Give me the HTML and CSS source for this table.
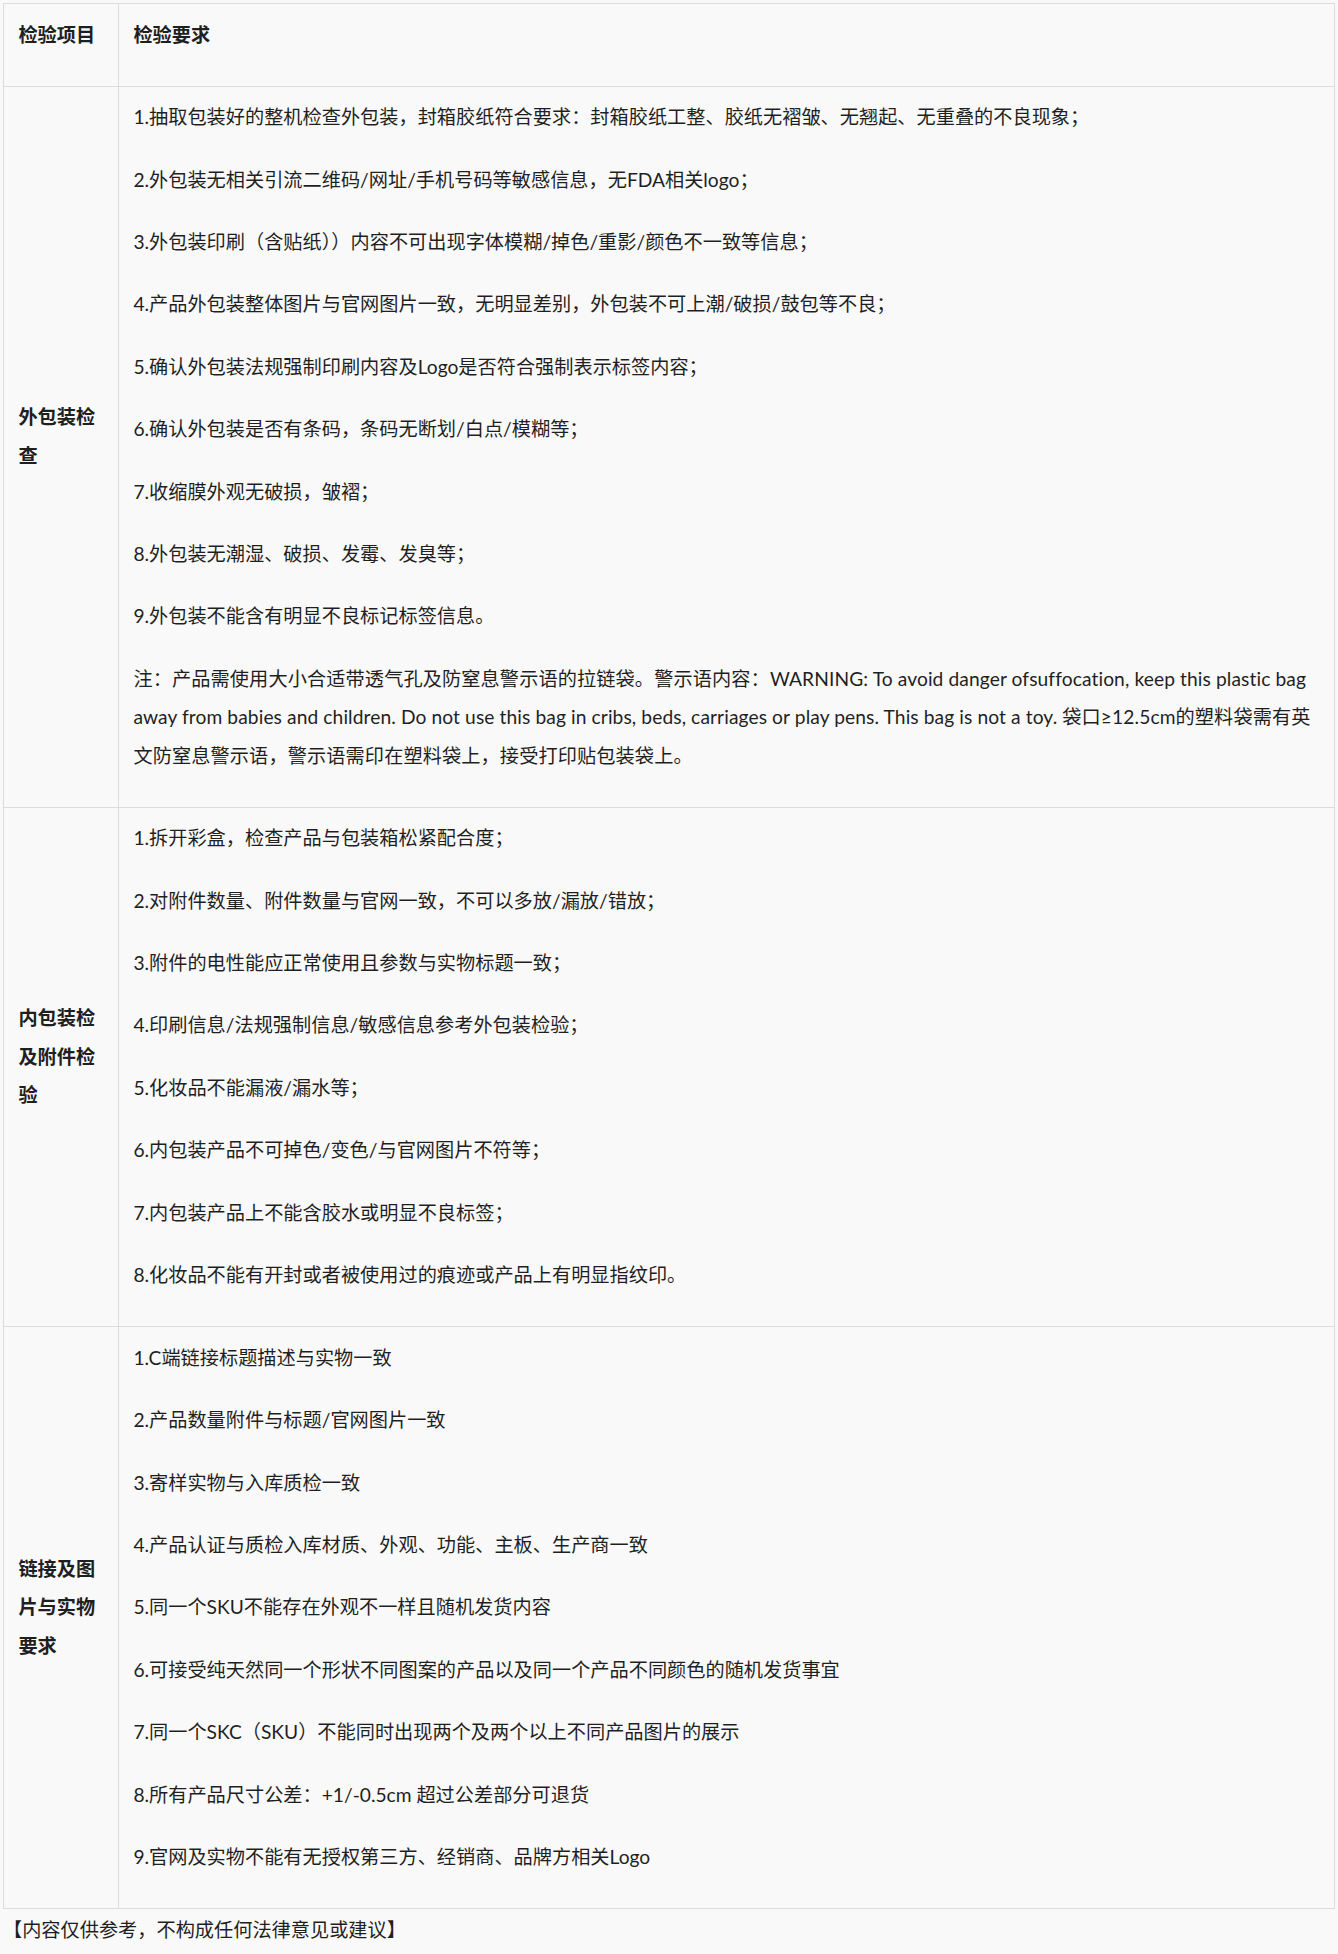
FILE: index.html
```html
<!DOCTYPE html>
<html lang="zh-CN">
<head>
<meta charset="utf-8">
<title>检验要求</title>
<link rel="stylesheet" href="styles.css">
</head>
<body>
<div class="page">
<table class="spec">
  <colgroup><col class="col-item"><col class="col-req"></colgroup>
  <thead>
    <tr>
      <th><p>检验项目</p></th>
      <th><p>检验要求</p></th>
    </tr>
  </thead>
  <tbody>
    <tr>
      <th><p>外包装检查</p></th>
      <td>
        <p>1.抽取包装好的整机检查外包装，封箱胶纸符合要求：封箱胶纸工整、胶纸无褶皱、无翘起、无重叠的不良现象；</p>
        <p>2.外包装无相关引流二维码/网址/手机号码等敏感信息，无FDA相关logo；</p>
        <p>3.外包装印刷（含贴纸））内容不可出现字体模糊/掉色/重影/颜色不一致等信息；</p>
        <p>4.产品外包装整体图片与官网图片一致，无明显差别，外包装不可上潮/破损/鼓包等不良；</p>
        <p>5.确认外包装法规强制印刷内容及Logo是否符合强制表示标签内容；</p>
        <p>6.确认外包装是否有条码，条码无断划/白点/模糊等；</p>
        <p>7.收缩膜外观无破损，皱褶；</p>
        <p>8.外包装无潮湿、破损、发霉、发臭等；</p>
        <p>9.外包装不能含有明显不良标记标签信息。</p>
        <p class="note">注：产品需使用大小合适带透气孔及防窒息警示语的拉链袋。警示语内容：WARNING: To avoid danger ofsuffocation, keep this plastic bag away from babies and children. Do not use this bag in cribs, beds, carriages or play pens. This bag is not a toy. 袋口≥12.5cm的塑料袋需有英文防窒息警示语，警示语需印在塑料袋上，接受打印贴包装袋上。</p>
      </td>
    </tr>
    <tr>
      <th><p>内包装检及附件检验</p></th>
      <td>
        <p>1.拆开彩盒，检查产品与包装箱松紧配合度；</p>
        <p>2.对附件数量、附件数量与官网一致，不可以多放/漏放/错放；</p>
        <p>3.附件的电性能应正常使用且参数与实物标题一致；</p>
        <p>4.印刷信息/法规强制信息/敏感信息参考外包装检验；</p>
        <p>5.化妆品不能漏液/漏水等；</p>
        <p>6.内包装产品不可掉色/变色/与官网图片不符等；</p>
        <p>7.内包装产品上不能含胶水或明显不良标签；</p>
        <p>8.化妆品不能有开封或者被使用过的痕迹或产品上有明显指纹印。</p>
      </td>
    </tr>
    <tr>
      <th><p>链接及图片与实物要求</p></th>
      <td>
        <p>1.C端链接标题描述与实物一致</p>
        <p>2.产品数量附件与标题/官网图片一致</p>
        <p>3.寄样实物与入库质检一致</p>
        <p>4.产品认证与质检入库材质、外观、功能、主板、生产商一致</p>
        <p>5.同一个SKU不能存在外观不一样且随机发货内容</p>
        <p>6.可接受纯天然同一个形状不同图案的产品以及同一个产品不同颜色的随机发货事宜</p>
        <p>7.同一个SKC（SKU）不能同时出现两个及两个以上不同产品图片的展示</p>
        <p>8.所有产品尺寸公差：+1/-0.5cm 超过公差部分可退货</p>
        <p>9.官网及实物不能有无授权第三方、经销商、品牌方相关Logo</p>
      </td>
    </tr>
  </tbody>
</table>
<p class="disclaimer">【内容仅供参考，不构成任何法律意见或建议】</p>
</div>
</body>
</html>
```

FILE: styles.css
```css
html, body {
  margin: 0;
  padding: 0;
  background: #f9f9f9;
}
body {
  font-family: "Lato", "Noto Sans CJK SC", sans-serif;
  font-size: 19.2px;
  line-height: 38.4px;
  color: #1f1f1f;
}
.page {
  padding: 3px 3px 0 3px;
}
.spec {
  width: 1332px;
  border-collapse: collapse;
  table-layout: fixed;
}
.col-item { width: 115px; }
.spec th,
.spec td {
  border: 1px solid #dcdcdc;
  padding: 9.6px 14.4px;
  text-align: left;
  vertical-align: middle;
}
.spec th {
  font-weight: bold;
}
.spec thead th {
  vertical-align: top;
}
.spec p {
  margin: 0 0 22px 0;
  padding-top: 2px;
}
.spec .note {
  letter-spacing: 0.1px;
}
.disclaimer {
  margin: 0;
  padding: 2px 0 0 0;
}
```
